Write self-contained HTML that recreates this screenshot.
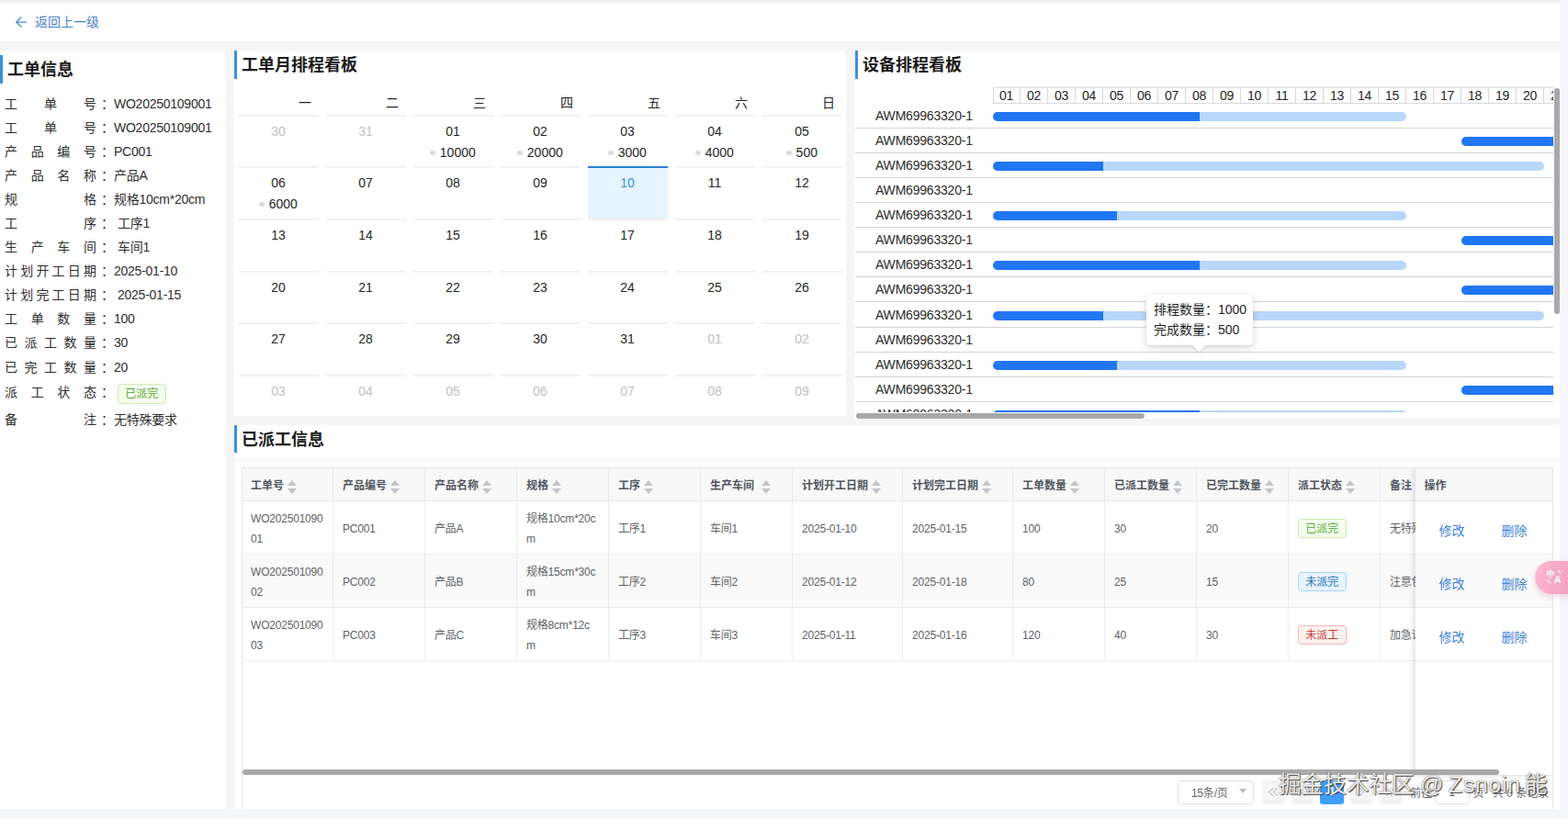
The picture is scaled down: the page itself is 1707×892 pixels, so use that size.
<!DOCTYPE html><html lang="zh-CN"><head><meta charset="utf-8"><title>工单排程</title><style>
*{box-sizing:border-box;margin:0;padding:0}
html,body{width:1707px;height:892px;overflow:hidden}
body{position:relative;background:#f5f5f5;font-family:"Liberation Sans","Noto Sans CJK SC",sans-serif;font-size:14px;color:#333}
.abs{position:absolute}
.panel{position:absolute;background:#fff}
.bar{position:absolute;width:3px;background:#3b8fdc}
.ttl{position:absolute;font-size:18px;font-weight:700;color:#1a1a1a;line-height:24px;white-space:nowrap}
/* left info */
.irow{position:absolute;left:5px;height:26px;line-height:26px;white-space:nowrap;font-size:14px;color:#2e2e2e}
.irow .lb{display:inline-block;width:100px;text-align:justify;text-align-last:justify;vertical-align:top}
.irow .cl{position:absolute;left:105px;top:0}
.irow .vl{position:absolute;top:0;letter-spacing:-0.25px}
.tag{display:inline-block;font-size:12px;line-height:20.6px;height:21.5px;padding:0 7.3px;letter-spacing:0;border:1px solid;border-radius:4px;white-space:nowrap}
.tg{color:#55a536;background:#f6ffed;border-color:#c8eaae}
.tb{color:#2170b8;background:#e6f4ff;border-color:#a6d2f8}
.tr{color:#c43434;background:#fff1f0;border-color:#f6b6b2}
/* calendar */
.wk{position:absolute;top:100px;width:14px;height:24px;line-height:24px;font-size:14px;color:#262626;text-align:center}
.cl-line{position:absolute;height:2px;width:87px;background:#f1f1f1}
.dt{position:absolute;width:87px;height:24px;line-height:24px;text-align:center;font-size:14px;color:#262626}
.dt.o{color:#bfbfbf}
.ev{position:absolute;width:87px;height:22px;line-height:22px;text-align:center;font-size:14px;color:#262626;white-space:nowrap}
.ev i{display:inline-block;width:5.6px;height:5.6px;border-radius:50%;background:#dadada;vertical-align:middle;margin-right:5px;position:relative;top:-1px}
/* gantt */
.gh{position:absolute;letter-spacing:-0.3px;top:95px;height:18px;border:1px solid #d9d9d9;border-left:none;width:30px;text-align:center;line-height:16px;font-size:14px;color:#262626;background:#fff}
.gl{position:absolute;left:0;height:1px;background:#d4d4d4}
.gn{position:absolute;left:22px;letter-spacing:-0.2px;height:20px;line-height:20px;font-size:14px;color:#2b2b2b;white-space:nowrap}
.gb{position:absolute;height:10px;border-radius:5px;background:#b8d7fa;overflow:hidden}
.gb b{position:absolute;left:0;top:0;height:10px;background:#2176f3;display:block}
/* table */
.th{position:absolute;top:0;height:35px;line-height:39px;overflow:hidden;font-size:12px;font-weight:700;color:#50565f;padding-left:10px;white-space:nowrap;border-right:1px solid #ebebed;background:#f8f8f9}
.td{position:absolute;letter-spacing:-0.2px;font-size:12px;color:#606266;padding-left:10px;border-right:1px solid #ededef;border-bottom:1px solid #ededef;white-space:nowrap;overflow:hidden}
.sc{position:absolute;width:10px;height:16px}
.sc:before,.sc:after{content:"";position:absolute;left:0;border-left:5px solid transparent;border-right:5px solid transparent}
.sc:before{top:0;border-bottom:6px solid #c3c5c9}
.sc:after{top:8.7px;border-top:6px solid #c3c5c9}
.lnk{position:absolute;font-size:14px;color:#3f82d8;white-space:nowrap;line-height:20px}
.pb{position:absolute;top:850.3px;height:25.4px;width:24.8px;border-radius:2.5px;background:#f4f4f5;color:#c0c4cc;text-align:center;line-height:25px;font-size:13px}
</style></head><body>
<div class="abs" style="left:0;top:0;width:1707px;height:3px;background:#efefef"></div>
<div class="abs" style="left:1698px;top:0;width:9px;height:892px;background:#f5f6fa"></div>
<div class="abs" style="left:0;top:880.5px;width:1707px;height:11.5px;background:#f5f6f8"></div>
<div class="panel" style="left:0;top:3px;width:1698px;height:42px"></div>
<svg class="abs" style="left:16px;top:17px" width="14" height="14" viewBox="0 0 14 14"><path d="M7.2 1.5 L1.8 7 L7.2 12.5 M1.8 7 L13 7" fill="none" stroke="#5088d6" stroke-width="1.25"/></svg>
<div class="abs" style="left:38px;top:13px;line-height:22px;font-size:14px;color:#4a80cf;white-space:nowrap">返回上一级</div>
<div class="panel" style="left:0;top:55px;width:245px;height:826px"></div>
<div class="bar" style="left:0;top:60px;height:31px"></div>
<div class="ttl" style="left:8px;top:64px">工单信息</div>
<div class="irow" style="top:99.5px"><span class="lb">工单号</span><span class="cl">：</span><span class="vl" style="left:119px">WO20250109001</span></div>
<div class="irow" style="top:125.6px"><span class="lb">工单号</span><span class="cl">：</span><span class="vl" style="left:119px">WO20250109001</span></div>
<div class="irow" style="top:151.7px"><span class="lb">产品编号</span><span class="cl">：</span><span class="vl" style="left:119px">PC001</span></div>
<div class="irow" style="top:177.8px"><span class="lb">产品名称</span><span class="cl">：</span><span class="vl" style="left:119px">产品A</span></div>
<div class="irow" style="top:203.8px"><span class="lb">规格</span><span class="cl">：</span><span class="vl" style="left:119px">规格10cm*20cm</span></div>
<div class="irow" style="top:229.9px"><span class="lb">工序</span><span class="cl">：</span><span class="vl" style="left:123px">工序1</span></div>
<div class="irow" style="top:256.0px"><span class="lb">生产车间</span><span class="cl">：</span><span class="vl" style="left:123px">车间1</span></div>
<div class="irow" style="top:282.1px"><span class="lb">计划开工日期</span><span class="cl">：</span><span class="vl" style="left:119px">2025-01-10</span></div>
<div class="irow" style="top:308.2px"><span class="lb">计划完工日期</span><span class="cl">：</span><span class="vl" style="left:123px">2025-01-15</span></div>
<div class="irow" style="top:334.3px"><span class="lb">工单数量</span><span class="cl">：</span><span class="vl" style="left:119px">100</span></div>
<div class="irow" style="top:360.4px"><span class="lb">已派工数量</span><span class="cl">：</span><span class="vl" style="left:119px">30</span></div>
<div class="irow" style="top:386.5px"><span class="lb">已完工数量</span><span class="cl">：</span><span class="vl" style="left:119px">20</span></div>
<div class="irow" style="top:414.0px"><span class="lb">派工状态</span><span class="cl">：</span><span class="vl" style="left:123px;top:4.2px;line-height:20px"><span class="tag tg">已派完</span></span></div>
<div class="irow" style="top:444.4px"><span class="lb">备注</span><span class="cl">：</span><span class="vl" style="left:119px">无特殊要求</span></div>
<div class="panel" style="left:254px;top:55px;width:667px;height:397.5px"></div>
<div class="bar" style="left:255px;top:55px;height:31px"></div>
<div class="ttl" style="left:263px;top:59px">工单月排程看板</div>
<div class="wk" style="left:325.0px">一</div>
<div class="wk" style="left:420.0px">二</div>
<div class="wk" style="left:515.0px">三</div>
<div class="wk" style="left:610.0px">四</div>
<div class="wk" style="left:705.0px">五</div>
<div class="wk" style="left:800.0px">六</div>
<div class="wk" style="left:895.0px">日</div>
<div class="cl-line" style="left:259.5px;top:125.0px"></div>
<div class="dt o" style="left:259.5px;top:131.3px">30</div>
<div class="cl-line" style="left:354.5px;top:125.0px"></div>
<div class="dt o" style="left:354.5px;top:131.3px">31</div>
<div class="cl-line" style="left:449.5px;top:125.0px"></div>
<div class="dt" style="left:449.5px;top:131.3px">01</div>
<div class="ev" style="left:449.5px;top:155.2px"><i></i>10000</div>
<div class="cl-line" style="left:544.5px;top:125.0px"></div>
<div class="dt" style="left:544.5px;top:131.3px">02</div>
<div class="ev" style="left:544.5px;top:155.2px"><i></i>20000</div>
<div class="cl-line" style="left:639.5px;top:125.0px"></div>
<div class="dt" style="left:639.5px;top:131.3px">03</div>
<div class="ev" style="left:639.5px;top:155.2px"><i></i>3000</div>
<div class="cl-line" style="left:734.5px;top:125.0px"></div>
<div class="dt" style="left:734.5px;top:131.3px">04</div>
<div class="ev" style="left:734.5px;top:155.2px"><i></i>4000</div>
<div class="cl-line" style="left:829.5px;top:125.0px"></div>
<div class="dt" style="left:829.5px;top:131.3px">05</div>
<div class="ev" style="left:829.5px;top:155.2px"><i></i>500</div>
<div class="cl-line" style="left:259.5px;top:181.0px"></div>
<div class="dt" style="left:259.5px;top:187.3px">06</div>
<div class="ev" style="left:259.5px;top:211.2px"><i></i>6000</div>
<div class="cl-line" style="left:354.5px;top:181.0px"></div>
<div class="dt" style="left:354.5px;top:187.3px">07</div>
<div class="cl-line" style="left:449.5px;top:181.0px"></div>
<div class="dt" style="left:449.5px;top:187.3px">08</div>
<div class="cl-line" style="left:544.5px;top:181.0px"></div>
<div class="dt" style="left:544.5px;top:187.3px">09</div>
<div class="abs" style="left:639.5px;top:181.0px;width:87px;height:56.5px;background:#e6f4ff"></div>
<div class="cl-line" style="left:639.5px;top:181.0px;background:#2a7fd4"></div>
<div class="dt" style="left:639.5px;top:187.3px;color:#3a8ee0">10</div>
<div class="cl-line" style="left:734.5px;top:181.0px"></div>
<div class="dt" style="left:734.5px;top:187.3px">11</div>
<div class="cl-line" style="left:829.5px;top:181.0px"></div>
<div class="dt" style="left:829.5px;top:187.3px">12</div>
<div class="cl-line" style="left:259.5px;top:238.0px"></div>
<div class="dt" style="left:259.5px;top:244.3px">13</div>
<div class="cl-line" style="left:354.5px;top:238.0px"></div>
<div class="dt" style="left:354.5px;top:244.3px">14</div>
<div class="cl-line" style="left:449.5px;top:238.0px"></div>
<div class="dt" style="left:449.5px;top:244.3px">15</div>
<div class="cl-line" style="left:544.5px;top:238.0px"></div>
<div class="dt" style="left:544.5px;top:244.3px">16</div>
<div class="cl-line" style="left:639.5px;top:238.0px"></div>
<div class="dt" style="left:639.5px;top:244.3px">17</div>
<div class="cl-line" style="left:734.5px;top:238.0px"></div>
<div class="dt" style="left:734.5px;top:244.3px">18</div>
<div class="cl-line" style="left:829.5px;top:238.0px"></div>
<div class="dt" style="left:829.5px;top:244.3px">19</div>
<div class="cl-line" style="left:259.5px;top:294.5px"></div>
<div class="dt" style="left:259.5px;top:300.8px">20</div>
<div class="cl-line" style="left:354.5px;top:294.5px"></div>
<div class="dt" style="left:354.5px;top:300.8px">21</div>
<div class="cl-line" style="left:449.5px;top:294.5px"></div>
<div class="dt" style="left:449.5px;top:300.8px">22</div>
<div class="cl-line" style="left:544.5px;top:294.5px"></div>
<div class="dt" style="left:544.5px;top:300.8px">23</div>
<div class="cl-line" style="left:639.5px;top:294.5px"></div>
<div class="dt" style="left:639.5px;top:300.8px">24</div>
<div class="cl-line" style="left:734.5px;top:294.5px"></div>
<div class="dt" style="left:734.5px;top:300.8px">25</div>
<div class="cl-line" style="left:829.5px;top:294.5px"></div>
<div class="dt" style="left:829.5px;top:300.8px">26</div>
<div class="cl-line" style="left:259.5px;top:351.0px"></div>
<div class="dt" style="left:259.5px;top:357.3px">27</div>
<div class="cl-line" style="left:354.5px;top:351.0px"></div>
<div class="dt" style="left:354.5px;top:357.3px">28</div>
<div class="cl-line" style="left:449.5px;top:351.0px"></div>
<div class="dt" style="left:449.5px;top:357.3px">29</div>
<div class="cl-line" style="left:544.5px;top:351.0px"></div>
<div class="dt" style="left:544.5px;top:357.3px">30</div>
<div class="cl-line" style="left:639.5px;top:351.0px"></div>
<div class="dt" style="left:639.5px;top:357.3px">31</div>
<div class="cl-line" style="left:734.5px;top:351.0px"></div>
<div class="dt o" style="left:734.5px;top:357.3px">01</div>
<div class="cl-line" style="left:829.5px;top:351.0px"></div>
<div class="dt o" style="left:829.5px;top:357.3px">02</div>
<div class="cl-line" style="left:259.5px;top:407.5px"></div>
<div class="dt o" style="left:259.5px;top:413.8px">03</div>
<div class="cl-line" style="left:354.5px;top:407.5px"></div>
<div class="dt o" style="left:354.5px;top:413.8px">04</div>
<div class="cl-line" style="left:449.5px;top:407.5px"></div>
<div class="dt o" style="left:449.5px;top:413.8px">05</div>
<div class="cl-line" style="left:544.5px;top:407.5px"></div>
<div class="dt o" style="left:544.5px;top:413.8px">06</div>
<div class="cl-line" style="left:639.5px;top:407.5px"></div>
<div class="dt o" style="left:639.5px;top:413.8px">07</div>
<div class="cl-line" style="left:734.5px;top:407.5px"></div>
<div class="dt o" style="left:734.5px;top:413.8px">08</div>
<div class="cl-line" style="left:829.5px;top:407.5px"></div>
<div class="dt o" style="left:829.5px;top:413.8px">09</div>
<div class="panel" style="left:930px;top:55px;width:768px;height:401px"></div>
<div class="bar" style="left:931px;top:55px;height:31px"></div>
<div class="ttl" style="left:939px;top:59px">设备排程看板</div>
<div class="abs" style="left:931px;top:90px;width:760px;height:359px;overflow:hidden">
<div class="abs" style="left:149.5px;top:5px;width:1px;height:18px;background:#d9d9d9;z-index:2"></div>
<div class="gh" style="left:150px;top:5px">01</div>
<div class="gh" style="left:180px;top:5px">02</div>
<div class="gh" style="left:210px;top:5px">03</div>
<div class="gh" style="left:240px;top:5px">04</div>
<div class="gh" style="left:270px;top:5px">05</div>
<div class="gh" style="left:300px;top:5px">06</div>
<div class="gh" style="left:330px;top:5px">07</div>
<div class="gh" style="left:360px;top:5px">08</div>
<div class="gh" style="left:390px;top:5px">09</div>
<div class="gh" style="left:420px;top:5px">10</div>
<div class="gh" style="left:450px;top:5px">11</div>
<div class="gh" style="left:480px;top:5px">12</div>
<div class="gh" style="left:510px;top:5px">13</div>
<div class="gh" style="left:540px;top:5px">14</div>
<div class="gh" style="left:570px;top:5px">15</div>
<div class="gh" style="left:600px;top:5px">16</div>
<div class="gh" style="left:630px;top:5px">17</div>
<div class="gh" style="left:660px;top:5px">18</div>
<div class="gh" style="left:690px;top:5px">19</div>
<div class="gh" style="left:720px;top:5px">20</div>
<div class="gh" style="left:750px;top:5px">21</div>
<div class="gh" style="left:780px;top:5px">22</div>
<div class="gn" style="top:26px">AWM69963320-1</div>
<div class="gl" style="top:49.0px;width:760px"></div>
<div class="gb" style="left:150px;top:31.9px;width:450px"><b style="width:225px"></b></div>
<div class="gn" style="top:53px">AWM69963320-1</div>
<div class="gl" style="top:76.0px;width:760px"></div>
<div class="gb" style="left:660px;top:58.9px;width:400px"><b style="width:400px"></b></div>
<div class="gn" style="top:80px">AWM69963320-1</div>
<div class="gl" style="top:103.0px;width:760px"></div>
<div class="gb" style="left:150px;top:85.9px;width:600px"><b style="width:120px"></b></div>
<div class="gn" style="top:107px">AWM69963320-1</div>
<div class="gl" style="top:130.1px;width:760px"></div>
<div class="gn" style="top:134px">AWM69963320-1</div>
<div class="gl" style="top:157.1px;width:760px"></div>
<div class="gb" style="left:150px;top:140.0px;width:450px"><b style="width:135px"></b></div>
<div class="gn" style="top:161px">AWM69963320-1</div>
<div class="gl" style="top:184.2px;width:760px"></div>
<div class="gb" style="left:660px;top:167.1px;width:400px"><b style="width:400px"></b></div>
<div class="gn" style="top:188px">AWM69963320-1</div>
<div class="gl" style="top:211.0px;width:760px"></div>
<div class="gb" style="left:150px;top:193.9px;width:450px"><b style="width:225px"></b></div>
<div class="gn" style="top:215px">AWM69963320-1</div>
<div class="gl" style="top:238.1px;width:760px"></div>
<div class="gb" style="left:660px;top:221.0px;width:400px"><b style="width:400px"></b></div>
<div class="gn" style="top:243px">AWM69963320-1</div>
<div class="gl" style="top:265.8px;width:760px"></div>
<div class="gb" style="left:150px;top:248.7px;width:600px"><b style="width:120px"></b></div>
<div class="gn" style="top:270px">AWM69963320-1</div>
<div class="gl" style="top:292.8px;width:760px"></div>
<div class="gn" style="top:297px">AWM69963320-1</div>
<div class="gl" style="top:319.9px;width:760px"></div>
<div class="gb" style="left:150px;top:302.8px;width:450px"><b style="width:135px"></b></div>
<div class="gn" style="top:324px">AWM69963320-1</div>
<div class="gl" style="top:347.0px;width:760px"></div>
<div class="gb" style="left:660px;top:329.9px;width:400px"><b style="width:400px"></b></div>
<div class="gn" style="top:351px">AWM69963320-1</div>
<div class="gl" style="top:374.1px;width:760px"></div>
<div class="gb" style="left:150px;top:357.0px;width:450px"><b style="width:225px"></b></div>
</div>
<div class="abs" style="left:1692px;top:96px;width:6px;height:246px;border-radius:3px;background:#a8a8a8"></div>
<div class="abs" style="left:932px;top:450px;width:314px;height:6px;border-radius:3px;background:#a8a8a8"></div>
<div class="abs" style="left:1248px;top:321px;width:116px;height:55px;background:#fff;border-radius:4px;box-shadow:0 3px 10px rgba(0,0,0,.14),0 1px 3px rgba(0,0,0,.08)"></div>
<div class="abs" style="left:1300px;top:370px;width:11px;height:11px;background:#fff;transform:rotate(45deg);box-shadow:2px 2px 4px rgba(0,0,0,.08)"></div>
<div class="abs" style="left:1248px;top:323px;width:116px;height:50px;background:#fff;border-radius:4px"></div>
<div class="abs" style="left:1256px;top:325.5px;line-height:22.4px;font-size:14px;color:#1f1f1f;white-space:nowrap">排程数量：1000<br>完成数量：500</div>
<div class="panel" style="left:254.5px;top:463px;width:1443.5px;height:35px"></div>
<div class="abs" style="left:254.5px;top:498px;width:1443.5px;height:5px;background:#f9f9f9"></div>
<div class="panel" style="left:254.5px;top:503px;width:1443.5px;height:378px"></div>
<div class="bar" style="left:255px;top:463px;height:30px"></div>
<div class="ttl" style="left:263px;top:467px">已派工信息</div>
<div class="abs" style="left:263.0px;top:509px;width:1428px;height:372px;border-left:1px solid #e6e6e8;border-top:1px solid #e6e6e8;border-right:1px solid #e6e6e8;overflow:hidden">
<div class="th" style="left:0px;width:99px;padding-left:9px">工单号<span class="sc" style="left:49.0px;top:13.4px"></span></div>
<div class="th" style="left:99px;width:100px">产品编号<span class="sc" style="left:62.0px;top:13.4px"></span></div>
<div class="th" style="left:199px;width:100px">产品名称<span class="sc" style="left:62.0px;top:13.4px"></span></div>
<div class="th" style="left:299px;width:100px">规格<span class="sc" style="left:38.0px;top:13.4px"></span></div>
<div class="th" style="left:399px;width:100px">工序<span class="sc" style="left:38.0px;top:13.4px"></span></div>
<div class="th" style="left:499px;width:100px">生产车间<span class="sc" style="left:65.5px;top:13.4px"></span></div>
<div class="th" style="left:599px;width:120px">计划开工日期<span class="sc" style="left:86.0px;top:13.4px"></span></div>
<div class="th" style="left:719px;width:120px">计划完工日期<span class="sc" style="left:86.0px;top:13.4px"></span></div>
<div class="th" style="left:839px;width:100px">工单数量<span class="sc" style="left:62.0px;top:13.4px"></span></div>
<div class="th" style="left:939px;width:100px">已派工数量<span class="sc" style="left:74.0px;top:13.4px"></span></div>
<div class="th" style="left:1039px;width:100px">已完工数量<span class="sc" style="left:74.0px;top:13.4px"></span></div>
<div class="th" style="left:1139px;width:100px">派工状态<span class="sc" style="left:62.0px;top:13.4px"></span></div>
<div class="th" style="left:1239px;width:100px">备注</div>
<div class="abs" style="left:0;top:34.5px;width:1428px;height:1px;background:#e6e6e8"></div>
<div class="td" style="left:0px;top:35.5px;width:99px;height:58px;background:#fff;padding-left:9px"><div style="line-height:21.8px;padding-top:9.3px">WO202501090<br>01</div></div>
<div class="td" style="left:99px;top:35.5px;width:100px;height:58px;background:#fff"><div style="line-height:58px;padding-top:1px">PC001</div></div>
<div class="td" style="left:199px;top:35.5px;width:100px;height:58px;background:#fff"><div style="line-height:58px;padding-top:1px">产品A</div></div>
<div class="td" style="left:299px;top:35.5px;width:100px;height:58px;background:#fff"><div style="line-height:21.8px;padding-top:9.3px">规格10cm*20c<br>m</div></div>
<div class="td" style="left:399px;top:35.5px;width:100px;height:58px;background:#fff"><div style="line-height:58px;padding-top:1px">工序1</div></div>
<div class="td" style="left:499px;top:35.5px;width:100px;height:58px;background:#fff"><div style="line-height:58px;padding-top:1px">车间1</div></div>
<div class="td" style="left:599px;top:35.5px;width:120px;height:58px;background:#fff"><div style="line-height:58px;padding-top:1px">2025-01-10</div></div>
<div class="td" style="left:719px;top:35.5px;width:120px;height:58px;background:#fff"><div style="line-height:58px;padding-top:1px">2025-01-15</div></div>
<div class="td" style="left:839px;top:35.5px;width:100px;height:58px;background:#fff"><div style="line-height:58px;padding-top:1px">100</div></div>
<div class="td" style="left:939px;top:35.5px;width:100px;height:58px;background:#fff"><div style="line-height:58px;padding-top:1px">30</div></div>
<div class="td" style="left:1039px;top:35.5px;width:100px;height:58px;background:#fff"><div style="line-height:58px;padding-top:1px">20</div></div>
<div class="td" style="left:1139px;top:35.5px;width:100px;height:58px;background:#fff"><span class="tag tg" style="position:absolute;left:10px;top:19.2px">已派完</span></div>
<div class="td" style="left:1239px;top:35.5px;width:100px;height:58px;background:#fff"><div style="line-height:58px;padding-top:1px">无特殊要求</div></div>
<div class="td" style="left:0px;top:93.5px;width:99px;height:58px;background:#fafafa;padding-left:9px"><div style="line-height:21.8px;padding-top:9.3px">WO202501090<br>02</div></div>
<div class="td" style="left:99px;top:93.5px;width:100px;height:58px;background:#fafafa"><div style="line-height:58px;padding-top:1px">PC002</div></div>
<div class="td" style="left:199px;top:93.5px;width:100px;height:58px;background:#fafafa"><div style="line-height:58px;padding-top:1px">产品B</div></div>
<div class="td" style="left:299px;top:93.5px;width:100px;height:58px;background:#fafafa"><div style="line-height:21.8px;padding-top:9.3px">规格15cm*30c<br>m</div></div>
<div class="td" style="left:399px;top:93.5px;width:100px;height:58px;background:#fafafa"><div style="line-height:58px;padding-top:1px">工序2</div></div>
<div class="td" style="left:499px;top:93.5px;width:100px;height:58px;background:#fafafa"><div style="line-height:58px;padding-top:1px">车间2</div></div>
<div class="td" style="left:599px;top:93.5px;width:120px;height:58px;background:#fafafa"><div style="line-height:58px;padding-top:1px">2025-01-12</div></div>
<div class="td" style="left:719px;top:93.5px;width:120px;height:58px;background:#fafafa"><div style="line-height:58px;padding-top:1px">2025-01-18</div></div>
<div class="td" style="left:839px;top:93.5px;width:100px;height:58px;background:#fafafa"><div style="line-height:58px;padding-top:1px">80</div></div>
<div class="td" style="left:939px;top:93.5px;width:100px;height:58px;background:#fafafa"><div style="line-height:58px;padding-top:1px">25</div></div>
<div class="td" style="left:1039px;top:93.5px;width:100px;height:58px;background:#fafafa"><div style="line-height:58px;padding-top:1px">15</div></div>
<div class="td" style="left:1139px;top:93.5px;width:100px;height:58px;background:#fafafa"><span class="tag tb" style="position:absolute;left:10px;top:19.2px">未派完</span></div>
<div class="td" style="left:1239px;top:93.5px;width:100px;height:58px;background:#fafafa"><div style="line-height:58px;padding-top:1px">注意包装</div></div>
<div class="td" style="left:0px;top:151.5px;width:99px;height:58px;background:#fff;padding-left:9px"><div style="line-height:21.8px;padding-top:9.3px">WO202501090<br>03</div></div>
<div class="td" style="left:99px;top:151.5px;width:100px;height:58px;background:#fff"><div style="line-height:58px;padding-top:1px">PC003</div></div>
<div class="td" style="left:199px;top:151.5px;width:100px;height:58px;background:#fff"><div style="line-height:58px;padding-top:1px">产品C</div></div>
<div class="td" style="left:299px;top:151.5px;width:100px;height:58px;background:#fff"><div style="line-height:21.8px;padding-top:9.3px">规格8cm*12c<br>m</div></div>
<div class="td" style="left:399px;top:151.5px;width:100px;height:58px;background:#fff"><div style="line-height:58px;padding-top:1px">工序3</div></div>
<div class="td" style="left:499px;top:151.5px;width:100px;height:58px;background:#fff"><div style="line-height:58px;padding-top:1px">车间3</div></div>
<div class="td" style="left:599px;top:151.5px;width:120px;height:58px;background:#fff"><div style="line-height:58px;padding-top:1px">2025-01-11</div></div>
<div class="td" style="left:719px;top:151.5px;width:120px;height:58px;background:#fff"><div style="line-height:58px;padding-top:1px">2025-01-16</div></div>
<div class="td" style="left:839px;top:151.5px;width:100px;height:58px;background:#fff"><div style="line-height:58px;padding-top:1px">120</div></div>
<div class="td" style="left:939px;top:151.5px;width:100px;height:58px;background:#fff"><div style="line-height:58px;padding-top:1px">40</div></div>
<div class="td" style="left:1039px;top:151.5px;width:100px;height:58px;background:#fff"><div style="line-height:58px;padding-top:1px">30</div></div>
<div class="td" style="left:1139px;top:151.5px;width:100px;height:58px;background:#fff"><span class="tag tr" style="position:absolute;left:10px;top:19.2px">未派工</span></div>
<div class="td" style="left:1239px;top:151.5px;width:100px;height:58px;background:#fff"><div style="line-height:58px;padding-top:1px">加急订单</div></div>
<div class="abs" style="left:1276.5px;top:0;width:150px;height:335px;background:#fff;box-shadow:-3px 0 6px rgba(0,0,0,.10);border-bottom:1px solid #e6e6e8">
<div class="th" style="left:0;width:149px;border-right:none">操作</div>
<div class="abs" style="left:0;top:34.5px;width:149px;height:1px;background:#e6e6e8"></div>
<div class="abs" style="left:0;top:35.5px;width:149px;height:58px;background:#fff;border-bottom:1px solid #ededef"></div>
<div class="lnk" style="left:26px;top:58.0px">修改</div>
<div class="lnk" style="left:94px;top:58.0px">删除</div>
<div class="abs" style="left:0;top:93.5px;width:149px;height:58px;background:#fafafa;border-bottom:1px solid #ededef"></div>
<div class="lnk" style="left:26px;top:116.0px">修改</div>
<div class="lnk" style="left:94px;top:116.0px">删除</div>
<div class="abs" style="left:0;top:151.5px;width:149px;height:58px;background:#fff;border-bottom:1px solid #ededef"></div>
<div class="lnk" style="left:26px;top:174.0px">修改</div>
<div class="lnk" style="left:94px;top:174.0px">删除</div>
</div>
<div class="abs" style="left:0.3px;top:328.2px;width:1367.5px;height:5.5px;border-radius:3px;background:#a9a9a9"></div>
</div>
<div class="abs" style="left:1282.4px;top:850.3px;width:83px;height:25.3px;border:1px solid #dedfe3;border-radius:3.5px;background:#fff;font-size:12px;color:#63666b;line-height:26.6px;padding-left:13.5px;letter-spacing:-0.2px">15条/页<span style="position:absolute;left:66px;top:8.2px;border-left:4.6px solid transparent;border-right:4.6px solid transparent;border-top:5.8px solid #b9bdc6"></span></div>
<div class="pb" style="left:1373.5px"><svg style="position:absolute;left:6.5px;top:7px" width="12.5" height="11.5" viewBox="0 0 12.5 11.5"><path d="M6.2 1.2 L1.6 5.6 L6.2 10 M11 1.2 L6.4 5.6 L11 10" fill="none" stroke="#c3c6cd" stroke-width="1.1"/></svg></div>
<div class="pb" style="left:1405.5px"><svg style="position:absolute;left:6.5px;top:7px" width="12.5" height="11.5" viewBox="0 0 12.5 11.5"><path d="M8.4 1.2 L3.8 5.6 L8.4 10" fill="none" stroke="#c3c6cd" stroke-width="1.1"/></svg></div>
<div class="pb" style="left:1469.5px"><svg style="position:absolute;left:6.5px;top:7px" width="12.5" height="11.5" viewBox="0 0 12.5 11.5"><path d="M4 1.2 L8.6 5.6 L4 10" fill="none" stroke="#c3c6cd" stroke-width="1.1"/></svg></div>
<div class="pb" style="left:1501.0px"><svg style="position:absolute;left:6.5px;top:7px" width="12.5" height="11.5" viewBox="0 0 12.5 11.5"><path d="M1.4 1.2 L6 5.6 L1.4 10 M6.2 1.2 L10.8 5.6 L6.2 10" fill="none" stroke="#c3c6cd" stroke-width="1.1"/></svg></div>
<div class="pb" style="left:1437px;width:26.3px;background:#409eff;color:#fff;font-weight:700;font-size:12px;border-radius:3px">1</div>
<div class="abs" style="left:1535px;top:850.5px;font-size:12px;line-height:26px;color:#606266;white-space:nowrap">前往</div>
<div class="abs" style="left:1561.5px;top:850.3px;width:38px;height:25.3px;border:1px solid #dedfe3;border-radius:3.5px;background:#fff;font-size:12px;color:#606266;line-height:24px;text-align:center">1</div>
<div class="abs" style="left:1603.5px;top:850.5px;font-size:12px;line-height:26px;color:#606266;white-space:nowrap">页</div>
<div class="abs" style="left:1625px;top:850.5px;font-size:12px;line-height:26px;color:#606266;white-space:nowrap">共 0 条记录</div>
<div class="abs" style="left:1392px;top:839px;font-size:24.6px;line-height:32px;color:rgba(255,255,255,.88);white-space:nowrap;text-shadow:1px 1px 1px rgba(40,40,40,.85),0 0 2px rgba(90,90,90,.7),-0.5px -0.5px 0 rgba(140,140,140,.6)">掘金技术社区<span style="letter-spacing:0.8px;word-spacing:-2.5px;margin-left:1.5px"> @ Zsnoin</span><span style="margin-left:4px">能</span></div>
<div class="abs" style="left:1671.4px;top:611px;width:40px;height:35.5px;border-radius:18px 0 0 18px;background:linear-gradient(100deg,#fbb4cf 0%,#f7a3c2 55%,#f29cbd 100%);opacity:.93;box-shadow:0 3px 7px rgba(200,120,150,.28)"></div>
<svg class="abs" style="left:1680px;top:616px" width="27" height="24" viewBox="0 0 27 24"><text x="3.6" y="12.2" font-size="8.6" font-weight="700" fill="#fff" font-family="Liberation Sans,Noto Sans CJK SC,sans-serif">中</text><text x="11.8" y="19.4" font-size="11" font-weight="700" fill="#fff" font-family="Liberation Sans,Noto Sans CJK SC,sans-serif">A</text><path d="M15.2 5.6 Q18.6 5.2 18.8 9" fill="none" stroke="#fff" stroke-width="1.1"/><path d="M8.4 18.6 Q5 18.8 5 15" fill="none" stroke="#fff" stroke-width="1.1"/></svg>
</body></html>
